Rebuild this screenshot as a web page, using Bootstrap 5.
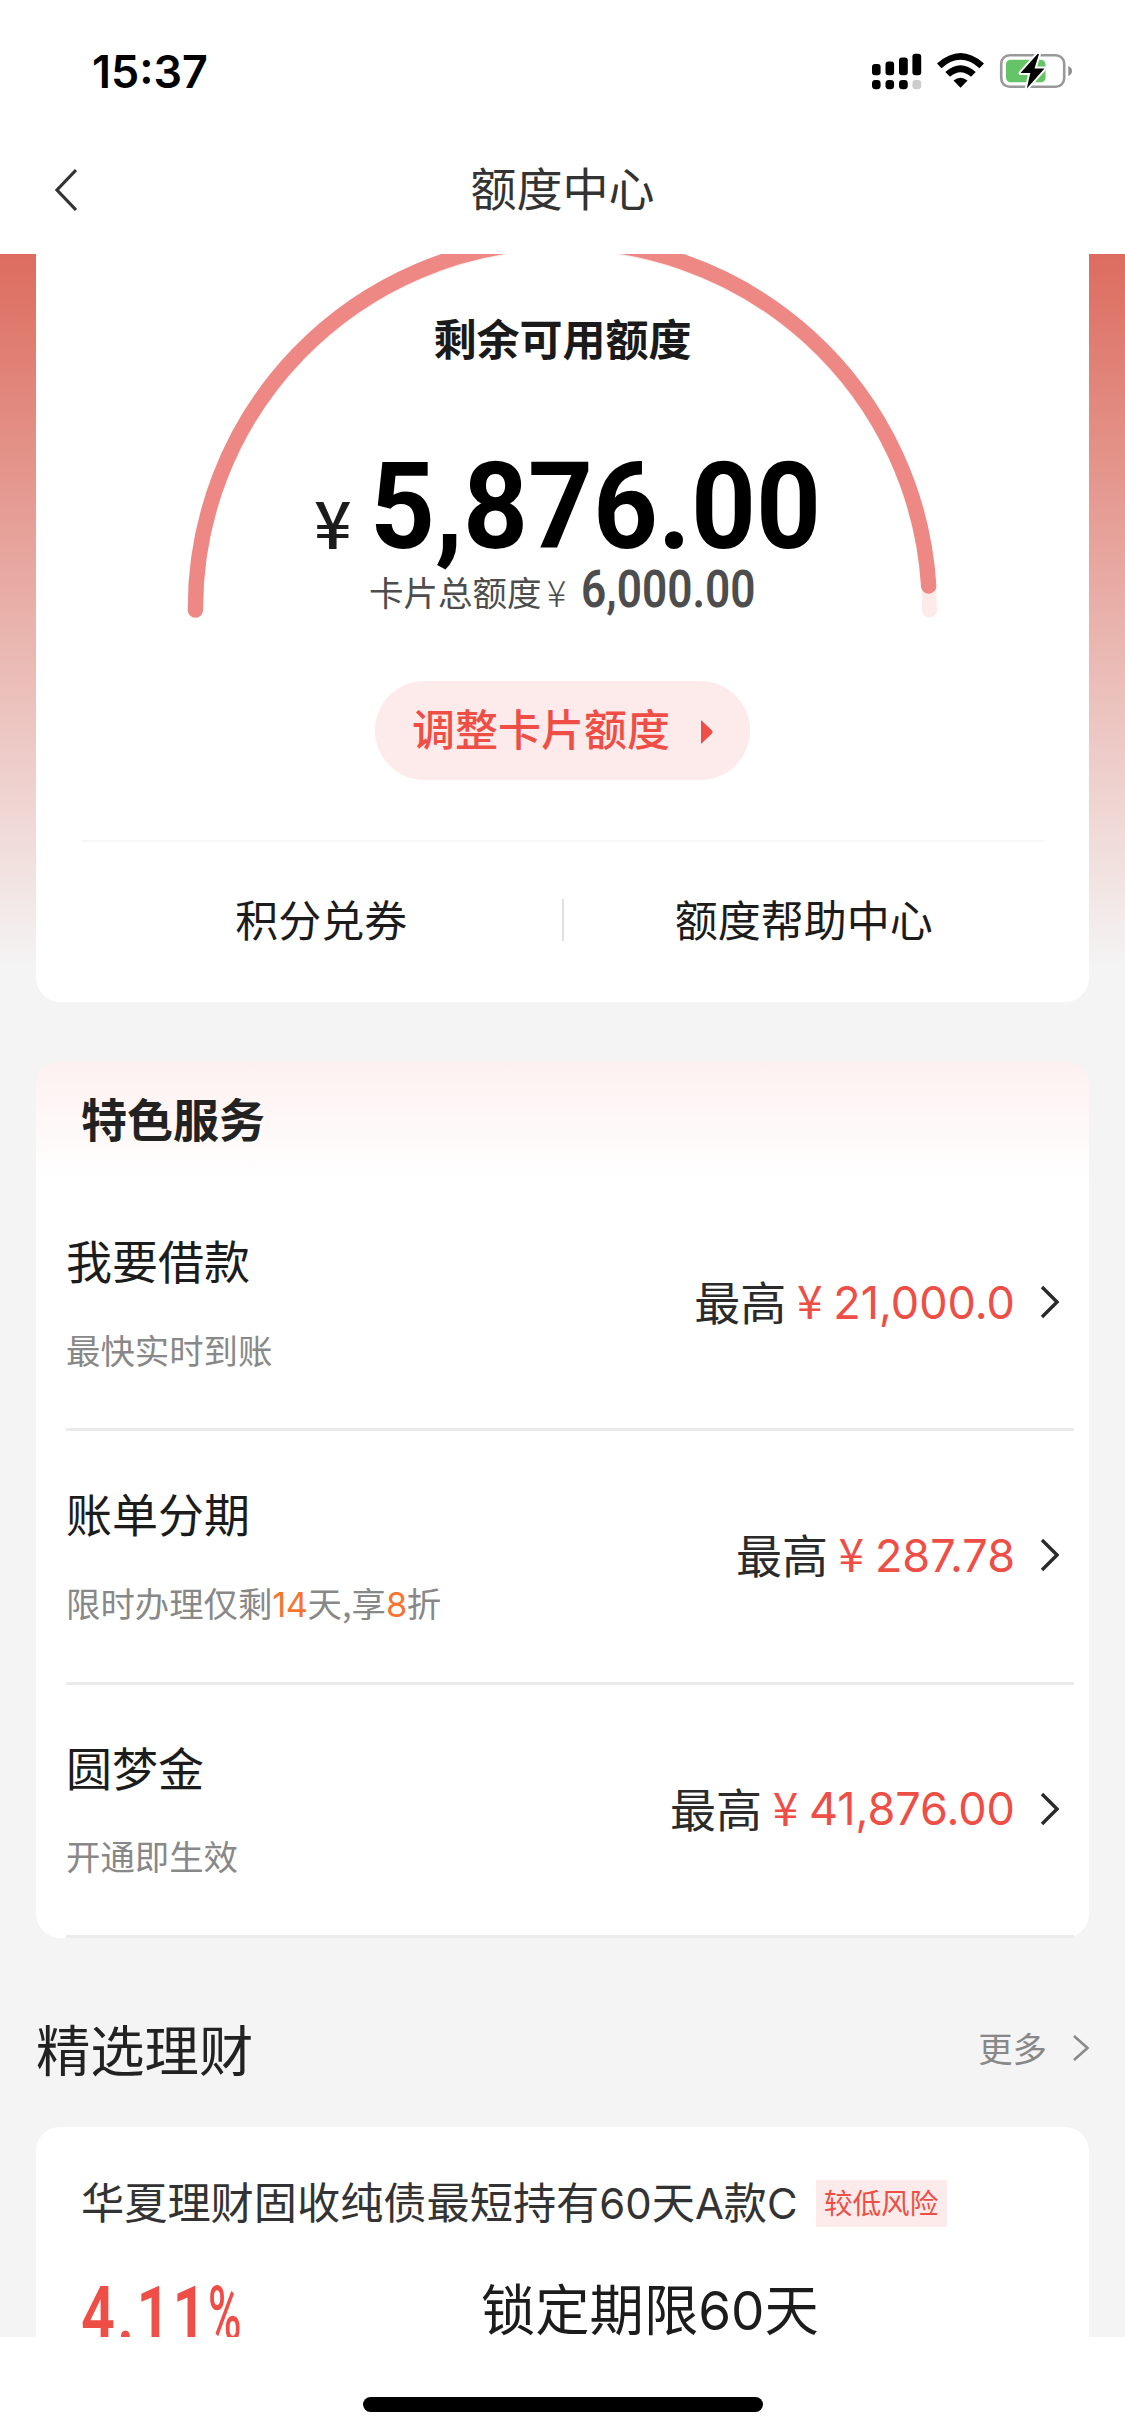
<!DOCTYPE html>
<html lang="zh-CN">
<head>
<meta charset="utf-8">
<meta name="viewport" content="width=device-width, initial-scale=1">
<title>额度中心</title>
<link rel="stylesheet" href="https://cdn.jsdelivr.net/npm/bootstrap@5.3.0/dist/css/bootstrap.min.css">
<style>
  body { font-family: "Noto Sans CJK SC", sans-serif; color: #1c1c1c; background: #fff; }
  svg { display: block; flex: none; }
  .screen { width: 1125px; height: 2435px; overflow: hidden; }
  .status { height: 144px; padding: 52px 53px 0 92px; }
  .clock { font: 600 44.9px/41px Inter, sans-serif; color: #000; }
  .titlebar { height: 110px; padding: 0 55px; }
  .page-title { font-size: 46px; line-height: 60px; color: #333; padding-bottom: 26px; }
  .back { margin-bottom: 18px; width: 22px; }
  .content { height: 2083px; padding: 0 36px; background: linear-gradient(#dd6c5f 0, #f4f4f4 712px) #f4f4f4; }
  .panel { background: #fff; border-radius: 24px; }
  .limit { height: 748px; border-radius: 0 0 24px 24px; }
  .gauge { height: 427px; }
  .gauge-art { position: absolute; left: 0; top: 0; }
  .gauge-body { position: relative; }
  .gauge-label { font-size: 43px; line-height: 60px; font-weight: 700; color: #1a1a1a; padding-top: 53px; }
  .din { font-family: Roboto, sans-serif; font-weight: 700; white-space: nowrap; display: block; transform-origin: 0 50%; }
  .amount { height: 110px; margin-top: 85px; padding-left: 276px; }
  .amount .yen { font-size: 66px; font-weight: 500; line-height: 137px; width: 56px; margin-left: 2px; }
  .amount .din { font-size: 121px; line-height: 110px; color: #000; transform: scaleX(.937); }
  .total { height: 50px; padding-left: 333px; color: #4d4d4d; margin-top: 3px; }
  .total .word { font-size: 34.5px; line-height: 53px; width: 178px; white-space: nowrap; }
  .total .yen { font-size: 36px; line-height: 53px; width: 34px; font-weight: 300; }
  .total .din { font-size: 52px; line-height: 50px; font-weight: 600; transform: scaleX(.85); }
  .adjust { width: 375px; height: 99px; padding: 0 37px 0 37px; border: 0; border-radius: 50px; background: #fcebea; color: #ee4e46; font-size: 43px; line-height: 60px; font-weight: 500; }
  .adjust span { padding-bottom: 7px; }
  .adjust svg { margin-top: 3px; }
  .links { border-top: 2px solid #f7f7f7; margin: 60px 45px 0; height: 160px; font-size: 43px; line-height: 60px; }
  .links a { width: 50%; padding-bottom: 6px; }
  .links .bar { width: 2px; height: 42px; background: #dfdfdf; margin-top: -2px; }
  .services { height: 877px; margin-top: 59px; background: linear-gradient(#fdf1f0, #fff 122px); }
  .services h2 { font-size: 46px; line-height: 60px; font-weight: 700; margin: 0; padding: 26px 0 31px 45px; color: #222; }
  .entry { height: 253.4px; margin: 0 15px 0 30px; border-bottom: 3px solid #ebebeb; padding: 51px 15px 0 0; }
  .entry .name { font-size: 46px; line-height: 60px; }
  .entry .hint { font-size: 34.4px; line-height: 50px; color: #888; margin-top: 34.500px; }
  .hint b { font-weight: 400; color: #f5752f; letter-spacing: -.5px; }
  .latin { font-family: Inter, sans-serif; }
  .quota { font-size: 46px; line-height: 60px; color: #2b2b2b; margin-top: 43px; height: 60px; }
  .quota .cap { padding-bottom: 4px; }
  .quota .yen { color: #ee4e46; width: 47px; text-align: center; padding-bottom: 6px; }
  .quota .latin { color: #ee4e46; margin-right: 25px; font-weight: 400; font-size: 45px; padding-top: 1px; }
  .section-head { height: 189px; padding-bottom: 2px; }
  .section-head h2 { font-size: 54.3px; line-height: 70px; margin: 32px 0 0; font-weight: 400; color: #222; }
  .more { font-size: 34.4px; line-height: 50px; color: #888; margin-top: 33px; margin-right: -1px; }
  .more span { padding: 0 1px 3px 0; }
  .product { height: 260px; padding: 43px 45px 0; }
  .product .name { font-size: 43.2px; line-height: 60px; color: #333; white-space: nowrap; }
  .product .name .latin { font-size: 41.900px; }
  .risk { width: 131px; height: 47px; background: #fcebea; color: #ee4e46; font-size: 28.6px; line-height: 43px; text-align: center; margin: 3px 0 0 18px; }
  .facts { margin-top: 37px; }
  .rate { width: 400px; padding-top: 3px; }
  .rate .din { font-size: 76px; line-height: 80px; color: #ee4e46; font-weight: 600; width: 127px; letter-spacing: 3px; transform: scaleX(.78); }
  .rate .pct { font-weight: 500; letter-spacing: 0; width: 40px; transform: scaleX(.6); }
  .term { font-size: 54.3px; line-height: 71px; white-space: nowrap; }
  .term .latin { font-size: 53px; }
  .foot { height: 98px; background: #fff; padding-top: 60px; }
  .home { width: 400px; height: 15px; border-radius: 8px; background: #000; }
</style>
<script src="https://cdn.jsdelivr.net/npm/bootstrap@5.3.0/dist/js/bootstrap.bundle.min.js"></script>
</head>
<body>
<div class="screen d-flex flex-column">
  <header class="flex-shrink-0 bg-white">
    <div class="status d-flex justify-content-between align-items-start">
      <span class="clock">15:37</span>
      <div class="d-flex">
        <svg width="200" height="40" viewBox="872 52 200 40">
          <g fill="#000">
            <rect x="872" y="64" width="8.6" height="11.3" rx="3"/><rect x="885.5" y="61.5" width="8.6" height="13.8" rx="3"/>
            <rect x="899" y="57.5" width="8.8" height="17.8" rx="3"/><rect x="912.4" y="53.8" width="8.8" height="21.5" rx="3"/>
            <rect x="872" y="80" width="8.6" height="9.2" rx="3.4"/><rect x="885.5" y="80" width="8.6" height="9.2" rx="3.4"/>
            <rect x="899" y="80" width="8.8" height="9.2" rx="3.4"/>
          </g>
          <rect x="912.4" y="80" width="8.8" height="9.2" rx="3.4" fill="#ccc"/>
          <path d="M937 63.500Q960.500 42.500 984 63.500L979.500 68.200Q960.500 51.500 941.500 68.200ZM945.300 72Q960.500 58.500 975.700 72L971 76.800Q960.500 67.800 950 76.800ZM953.500 80.500Q960.500 74.800 967.500 80.500L960.500 87.800Z" fill="#000"/>
          <rect x="1001.200" y="55.200" width="63" height="31.600" rx="8.500" fill="#fff" stroke="#999" stroke-width="2.600"/>
          <rect x="1006" y="59.700" width="39.500" height="22.600" rx="4.500" fill="#65c466"/>
          <path d="M1068.300 66Q1072 67.500 1072 71T1068.300 76Z" fill="#8e8e8e"/>
          <path d="M1037.500 54L1020.500 73H1030.300L1026.800 88.500L1044.500 68.500H1034.500L1039 54Z" fill="#000" stroke="#fff" stroke-width="4" paint-order="stroke" stroke-linejoin="round"/>
        </svg>
      </div>
    </div>
    <nav class="titlebar d-flex align-items-center justify-content-between">
      <a class="back" href="#" aria-label="返回"><svg width="22" height="44" viewBox="0 0 22 44"><path d="M21 2L2 22L21 42" fill="none" stroke="#333" stroke-width="3.200"/></svg></a>
      <div class="page-title">额度中心</div>
      <span class="back"></span>
    </nav>
  </header>

  <main class="content flex-shrink-0 overflow-hidden">
    <section class="panel limit">
      <div class="gauge position-relative overflow-hidden">
        <svg class="gauge-art" width="1053" height="427" viewBox="36 254 1053 427">
          <path d="M195.400 610A367 367 0 0 1 929.500 610" fill="none" stroke="#fdebea" stroke-width="15" stroke-linecap="round"/>
          <path d="M195.400 610A367 367 0 0 1 928.700 586" fill="none" stroke="#ee8885" stroke-width="15.400" stroke-linecap="round"/>
        </svg>
        <div class="gauge-body">
          <div class="gauge-label text-center">剩余可用额度</div>
          <div class="amount d-flex"><span class="yen">¥</span><span class="din">5,876.00</span></div>
          <div class="total d-flex"><span class="word">卡片总额度</span><span class="yen">¥</span><span class="din">6,000.00</span></div>
        </div>
      </div>
      <button class="adjust d-flex align-items-center justify-content-between mx-auto" type="button"><span>调整卡片额度</span>
        <svg width="12" height="24" viewBox="0 0 12 24"><path d="M0 0L10.500 10Q12.500 12 10.500 14L0 24Z" fill="#ee4e46"/></svg>
      </button>
      <div class="links d-flex align-items-center text-center">
        <a class="text-reset text-decoration-none">积分兑券</a><span class="bar"></span><a class="text-reset text-decoration-none">额度帮助中心</a>
      </div>
    </section>

    <section class="panel services">
      <h2>特色服务</h2>
      <div class="entry d-flex justify-content-between">
        <div><div class="name">我要借款</div><div class="hint">最快实时到账</div></div>
        <div class="quota d-flex align-items-center"><span class="cap">最高</span><span class="yen">¥</span><span class="latin">21,000.0</span>
          <svg width="19" height="34" viewBox="0 0 19 34"><path d="M2 2L17 17L2 32" fill="none" stroke="#2b2b2b" stroke-width="3.400"/></svg></div>
      </div>
      <div class="entry d-flex justify-content-between">
        <div><div class="name">账单分期</div><div class="hint">限时办理仅剩<b class="latin">14</b>天,享<b class="latin">8</b>折</div></div>
        <div class="quota d-flex align-items-center"><span class="cap">最高</span><span class="yen">¥</span><span class="latin">287.78</span>
          <svg width="19" height="34" viewBox="0 0 19 34"><path d="M2 2L17 17L2 32" fill="none" stroke="#2b2b2b" stroke-width="3.400"/></svg></div>
      </div>
      <div class="entry d-flex justify-content-between">
        <div><div class="name">圆梦金</div><div class="hint">开通即生效</div></div>
        <div class="quota d-flex align-items-center"><span class="cap">最高</span><span class="yen">¥</span><span class="latin">41,876.00</span>
          <svg width="19" height="34" viewBox="0 0 19 34"><path d="M2 2L17 17L2 32" fill="none" stroke="#2b2b2b" stroke-width="3.400"/></svg></div>
      </div>
    </section>

    <div class="section-head d-flex justify-content-between align-items-center">
      <h2>精选理财</h2>
      <div class="more d-flex align-items-center"><span>更多</span>
        <svg class="ms-4" width="18" height="28" viewBox="0 0 18 28"><path d="M2 2L15.500 14L2 26" fill="none" stroke="#8a8a8a" stroke-width="2.600"/></svg></div>
    </div>

    <section class="panel product">
      <div class="d-flex align-items-center">
        <span class="name">华夏理财固收纯债最短持有<span class="latin">60</span>天<span class="latin">A</span>款<span class="latin">C</span></span>
        <span class="risk">较低风险</span>
      </div>
      <div class="facts d-flex">
        <div class="rate d-flex"><span class="din">4.11</span><span class="din pct">%</span></div>
        <div class="term">锁定期限<span class="latin">60</span>天</div>
      </div>
    </section>
  </main>

  <footer class="foot flex-shrink-0"><div class="home mx-auto"></div></footer>
</div>
</body>
</html>
